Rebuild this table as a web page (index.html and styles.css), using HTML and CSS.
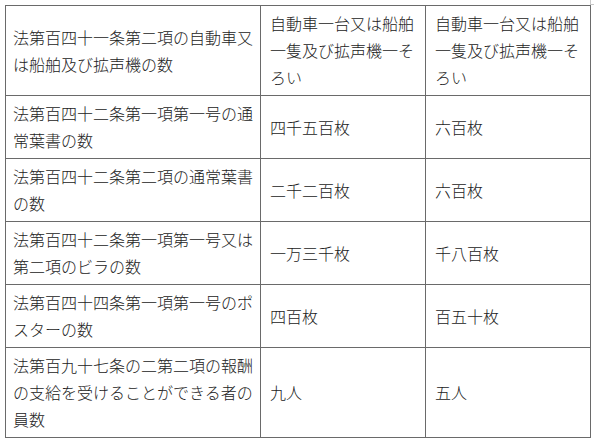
FILE: index.html
```html
<!DOCTYPE html>
<html lang="ja">
<head>
<meta charset="utf-8">
<link rel="stylesheet" href="styles.css">
</head>
<body>
<span class="corner"></span>
<table class="grid">
  <colgroup>
    <col class="c1"><col class="c2"><col class="c3">
  </colgroup>
  <tbody>
    <tr>
      <td>法第百四十一条第二項の自動車又は船舶及び拡声機の数</td>
      <td>自動車一台又は船舶一隻及び拡声機一そろい</td>
      <td>自動車一台又は船舶一隻及び拡声機一そろい</td>
    </tr>
    <tr>
      <td>法第百四十二条第一項第一号の通常葉書の数</td>
      <td>四千五百枚</td>
      <td>六百枚</td>
    </tr>
    <tr>
      <td>法第百四十二条第二項の通常葉書の数</td>
      <td>二千二百枚</td>
      <td>六百枚</td>
    </tr>
    <tr>
      <td>法第百四十二条第一項第一号又は第二項のビラの数</td>
      <td>一万三千枚</td>
      <td>千八百枚</td>
    </tr>
    <tr>
      <td>法第百四十四条第一項第一号のポスターの数</td>
      <td>四百枚</td>
      <td>百五十枚</td>
    </tr>
    <tr>
      <td>法第百九十七条の二第二項の報酬の支給を受けることができる者の員数</td>
      <td>九人</td>
      <td>五人</td>
    </tr>
  </tbody>
</table>
</body>
</html>
```
FILE: styles.css
```css
html, body {
  margin: 0;
  padding: 0;
  background: #ffffff;
}
body {
  padding: 5px 0 0 5px;
  font-family: "Noto Sans CJK JP", "Noto Sans", sans-serif;
  font-size: 16px;
  font-weight: 300;
  color: #222222;
}
.corner {
  position: absolute;
  top: 0;
  left: 590px;
  width: 3px;
  height: 4px;
  border-left: 1px solid #c8c8c8;
  border-bottom: 1px solid #c8c8c8;
}
.grid {
  border-collapse: collapse;
  table-layout: fixed;
  width: 585px;
}
.c1 { width: 255px; }
.c2 { width: 165px; }
.c3 { width: 165px; }
.grid td {
  border: 1px solid #6a6a6a;
  padding: 4px 7px 4px 7px;
  line-height: 27px;
  vertical-align: middle;
  word-break: break-all;
}
.grid td + td {
  padding-left: 9px;
}
```
